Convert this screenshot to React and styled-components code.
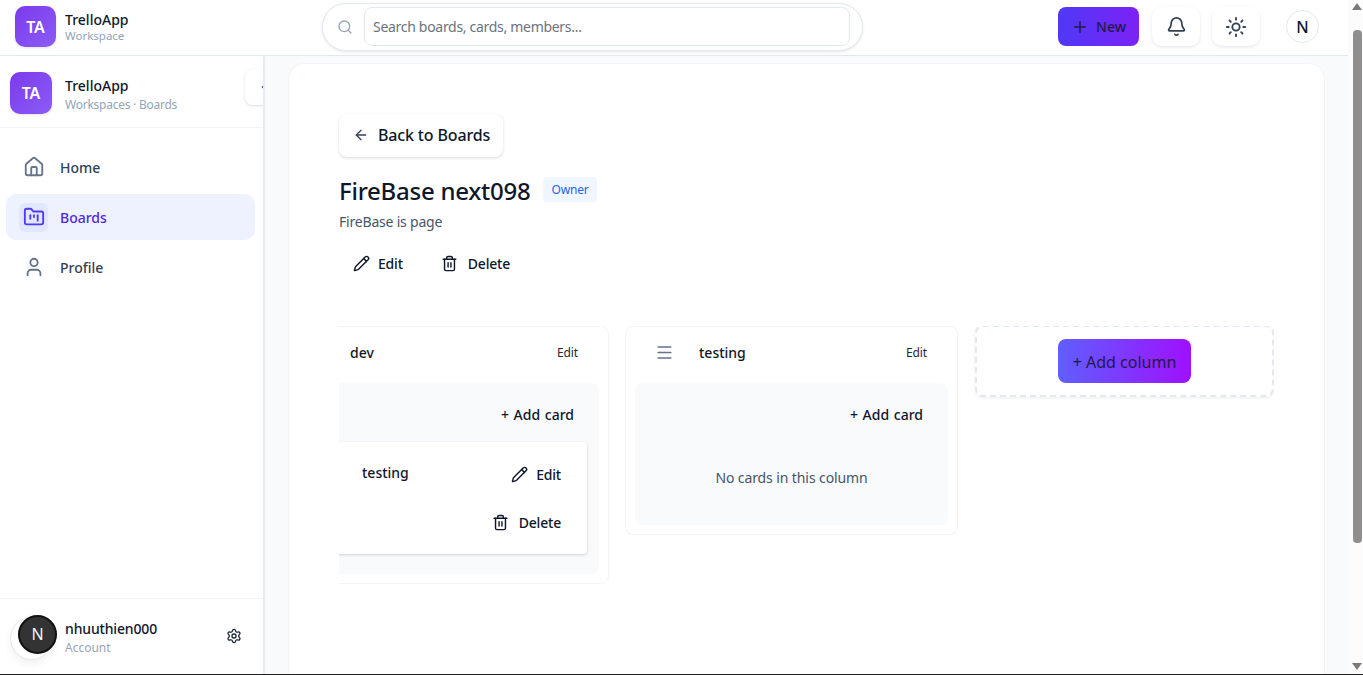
import styled, { createGlobalStyle } from "styled-components";
import {
  ArrowLeft,
  Bell,
  ChevronLeft,
  FolderKanban,
  House,
  Menu,
  Pencil,
  Plus,
  Search,
  Settings,
  Sun,
  Trash2,
  User,
} from "lucide-react";

const GlobalStyle = createGlobalStyle`
  html, body {
    margin: 0;
    height: 100%;
    overflow: hidden;
    background: #f8fafc;
    font-family: "Noto Sans", Inter, sans-serif;
    color: #0f172a;
  }
  * { box-sizing: border-box; }
`;

const Page = styled.div`
  display: flex;
  flex-direction: column;
  height: 675px;
  width: 1363px;
  position: relative;
  border-bottom: 1px solid #1f1f1f;
  overflow: hidden;
`;

const Header = styled.header`
  flex: none;
  height: 56px;
  width: 1348px;
  display: flex;
  align-items: center;
  padding: 0 29px 2px 15px;
  background: #fff;
  border-bottom: 1px solid #e2e8f0;
`;

const Brand = styled.div`
  display: flex;
  align-items: center;
  gap: 9px;
  width: 307px;
`;

const Logo = styled.div`
  width: ${(p) => p.$size}px;
  height: ${(p) => p.$size}px;
  flex: none;
  display: flex;
  align-items: center;
  justify-content: center;
  border-radius: 10px;
  background: linear-gradient(135deg, #7c3aed, #8b5cf6);
  color: #fff;
  font-size: 16px;
  font-weight: 600;
  box-shadow: 0 1px 3px rgba(15, 23, 42, 0.12);
`;

const BrandText = styled.div`
  display: flex;
  flex-direction: column;
  padding-top: ${(p) => (p.$spaced ? 4 : 0)}px;
`;

const BrandName = styled.span`
  font-size: 14px;
  line-height: 18px;
  font-weight: 500;
  color: #0f172a;
`;

const BrandSub = styled.span`
  font-size: ${(p) => (p.$spaced ? 12 : 11.5)}px;
  letter-spacing: ${(p) => (p.$spaced ? -0.25 : 0)}px;
  line-height: 14px;
  margin-top: ${(p) => (p.$spaced ? 3 : 0)}px;
  color: #94a3b8;
`;

const SearchBar = styled.div`
  width: 541px;
  height: 48px;
  display: flex;
  align-items: center;
  gap: 11px;
  padding: 0 12px 0 14px;
  border: 1px solid #e2e8f0;
  border-radius: 24px;
  background: #fff;
  box-shadow: 0 1px 3px rgba(15, 23, 42, 0.1);
  color: #94a3b8;
`;

const SearchInput = styled.div`
  flex: 1;
  height: 39px;
  display: flex;
  align-items: center;
  padding: 0 8px;
  border: 1px solid #e2e8f0;
  border-radius: 8px;
  font-size: 14px;
  letter-spacing: -0.3px;
  color: #6b7280;
`;

const HeaderActions = styled.div`
  margin-left: auto;
  display: flex;
  align-items: center;
  gap: 12px;
`;

const NewButton = styled.div`
  width: 81px;
  height: 39px;
  margin-right: 1px;
  display: flex;
  align-items: center;
  justify-content: center;
  gap: 7px;
  border-radius: 8px;
  background: linear-gradient(90deg, #4f39f6, #7c22f5);
  color: #1e1b4b;
  font-size: 14px;
  font-weight: 500;
`;

const IconButton = styled.div`
  width: 48px;
  height: 39px;
  display: flex;
  align-items: center;
  justify-content: center;
  border-radius: 10px;
  background: #fff;
  color: #334155;
  box-shadow: 0 1px 3px rgba(15, 23, 42, 0.12);
`;

const Avatar = styled.div`
  width: 33px;
  height: 33px;
  margin-left: 14px;
  display: flex;
  align-items: center;
  justify-content: center;
  border: 1px solid #e2e8f0;
  border-radius: 50%;
  font-size: 16px;
  font-weight: 500;
`;

const Body = styled.div`
  flex: 1;
  min-height: 0;
  display: flex;
  width: 1348px;
`;

const Sidebar = styled.aside`
  flex: none;
  width: 265px;
  margin-right: -1px;
  display: flex;
  flex-direction: column;
  background: #fff;
  border-right: 2px solid #e6ebf3;
`;

const SideTop = styled.div`
  position: relative;
  height: 72px;
  display: flex;
  align-items: center;
  gap: 13px;
  padding: 2px 10px 0;
  border-bottom: 1px solid #f1f5f9;
  overflow: hidden;
`;

const Collapse = styled.div`
  position: absolute;
  left: 245px;
  top: 13px;
  width: 36px;
  height: 36px;
  display: flex;
  align-items: center;
  padding-left: 12px;
  border-radius: 8px;
  background: #fff;
  color: #475569;
  box-shadow: 0 1px 3px rgba(15, 23, 42, 0.14);
`;

const Nav = styled.nav`
  flex: 1;
  display: flex;
  flex-direction: column;
  gap: 4px;
  padding: 16px 8px 0 6px;
`;

const NavItem = styled.div`
  height: 46px;
  display: flex;
  align-items: center;
  gap: 12px;
  padding-left: 13px;
  border-radius: 10px;
  background: ${(p) => (p.$active ? "#eef2ff" : "transparent")};
  color: ${(p) => (p.$active ? "#4f28e0" : "#334155")};
  font-size: 14px;
  font-weight: 500;
`;

const NavIcon = styled.span`
  width: 29px;
  height: 29px;
  display: flex;
  align-items: center;
  justify-content: center;
  border-radius: 6px;
  background: ${(p) => (p.$active ? "#e0e7ff" : "transparent")};
  color: ${(p) => (p.$active ? "#4f39f6" : "#64748b")};
`;

const Account = styled.div`
  height: 76px;
  display: flex;
  align-items: center;
  isolation: isolate;
  padding: 0 21px 0 18px;
  border-top: 1px solid #f1f5f9;
`;

const AccountAvatar = styled.div`
  position: relative;
  width: 39px;
  height: 39px;
  flex: none;
  margin: -5px 8px 0 0;
  display: flex;
  align-items: center;
  justify-content: center;
  border-radius: 50%;
  border: 2px solid #111;
  background: #333;
  color: #f1f5f9;
  font-size: 16px;

  &::before {
    content: "";
    position: absolute;
    left: -10px;
    top: 0;
    width: 41px;
    height: 41px;
    border: 1px solid #e2e8f0;
    border-radius: 50%;
    background: #fff;
    box-shadow: 0 4px 10px rgba(15, 23, 42, 0.06);
    z-index: -1;
  }
`;

const AccountText = styled.div`
  flex: 1;
  padding-top: 3px;
  display: flex;
  flex-direction: column;
`;

const AccountName = styled.span`
  font-size: 14px;
  line-height: 20px;
  letter-spacing: -0.15px;
  font-weight: 500;
  color: #0f172a;
`;

const AccountSub = styled.span`
  font-size: 12px;
  line-height: 18px;
  color: #94a3b8;
`;

const AccountGear = styled.span`
  display: flex;
  margin-top: -2px;
  color: #1e293b;
`;

const Main = styled.main`
  flex: 1;
  min-width: 0;
  padding: 7px 23px 0 24px;
  overflow: hidden;
`;

const Panel = styled.section`
  height: 720px;
  padding: 50px 50px 0;
  background: #fff;
  border: 1px solid #f1f5f9;
  border-radius: 16px;
`;

const BackButton = styled.div`
  width: 164px;
  height: 43px;
  display: flex;
  align-items: center;
  gap: 9px;
  padding: 0 0 2px 14px;
  border-radius: 8px;
  background: #fff;
  box-shadow: 0 1px 3px rgba(15, 23, 42, 0.16);
  color: #0f172a;
  font-size: 16px;
  letter-spacing: -0.15px;
  font-weight: 500;
`;

const TitleRow = styled.div`
  margin-top: 18px;
  display: flex;
  align-items: center;
  gap: 13px;
`;

const Title = styled.h1`
  margin: 0;
  font-size: 24px;
  line-height: 32px;
  letter-spacing: -0.25px;
  font-weight: 500;
  color: #0f172a;
`;

const Badge = styled.span`
  height: 25px;
  margin-bottom: 4px;
  padding: 0 8px;
  display: flex;
  align-items: center;
  border-radius: 4px;
  background: #eff6ff;
  color: #2563eb;
  font-size: 12px;
  letter-spacing: -0.15px;
`;

const Description = styled.p`
  margin: 5px 0 0;
  font-size: 14px;
  line-height: 20px;
  letter-spacing: -0.2px;
  color: #475569;
`;

const BoardActions = styled.div`
  margin-top: 22px;
  display: flex;
  gap: 38px;
  padding-left: 14px;
`;

const TextAction = styled.span`
  display: inline-flex;
  align-items: center;
  gap: ${(p) => p.$gap}px;
  font-size: 14px;
  letter-spacing: -0.2px;
  font-weight: 500;
  color: #0f172a;
`;

const BoardViewport = styled.div`
  margin-top: 53px;
  overflow: hidden;
`;

const BoardTrack = styled.div`
  display: flex;
  align-items: flex-start;
  gap: 16px;
  margin-left: -63px;
`;

const Column = styled.div`
  flex: none;
  width: 333px;
  padding: 0 9px 9px;
  border: 1px solid #f1f5f9;
  border-radius: 8px;
  background: #fff;
`;

const ColumnHead = styled.div`
  height: 56px;
  padding-bottom: 5px;
  display: flex;
  align-items: center;
  font-size: 14px;
  font-weight: 500;
`;

const Handle = styled.span`
  width: 64px;
  padding-left: 20px;
  display: flex;
  color: #64748b;
`;

const ColumnEdit = styled.span`
  margin-left: auto;
  margin-right: 21px;
  font-size: 12px;
  letter-spacing: -0.1px;
  font-weight: 400;
  color: #1e293b;
`;

const ColumnBody = styled.div`
  padding: 0 12px ${(p) => (p.$empty ? 0 : 20)}px;
  border-radius: 8px;
  background: #f8fafc;
  min-height: ${(p) => (p.$empty ? 142 : 0)}px;
`;

const AddCardRow = styled.div`
  height: 59px;
  padding: 4px 13px 0 0;
  display: flex;
  align-items: center;
  justify-content: flex-end;
  font-size: 14px;
  word-spacing: 1px;
  font-weight: 500;
  color: #0f172a;
`;

const Empty = styled.div`
  padding-top: 26px;
  text-align: center;
  font-size: 14px;
  line-height: 20px;
  letter-spacing: -0.1px;
  color: #475569;
`;

const Card = styled.div`
  height: 112px;
  padding: 20px 26px 0 64px;
  display: flex;
  justify-content: space-between;
  border-radius: 4px;
  background: #fff;
  box-shadow: 0 1px 3px rgba(15, 23, 42, 0.18);
`;

const CardTitle = styled.span`
  font-size: 14px;
  line-height: 22px;
  font-weight: 500;
`;

const CardActions = styled.div`
  display: flex;
  flex-direction: column;
  align-items: flex-end;
  gap: 29px;
  padding-top: 3px;
`;

const AddColumnBox = styled.div`
  flex: none;
  width: 299px;
  height: 72px;
  margin: -1px 0 0 1px;
  padding-top: 12px;
  display: flex;
  justify-content: center;
  border: 2px dashed #e2e8f0;
  border-radius: 8px;
  box-shadow: 0 1px 3px rgba(15, 23, 42, 0.08);
`;

const AddColumnButton = styled.div`
  width: 133px;
  height: 44px;
  padding-top: 1px;
  display: flex;
  align-items: center;
  justify-content: center;
  border-radius: 8px;
  background: linear-gradient(90deg, #5f5fff, #a010ff);
  color: #1e1b4b;
  font-size: 16px;
`;

const ScrollTrack = styled.div`
  position: absolute;
  top: 0;
  right: 0;
  bottom: 0;
  width: 15px;
  display: flex;
  flex-direction: column;
  align-items: center;
  padding: 3px 0 4px 3px;
  background: #fcfcfc;
`;

const ScrollArrow = styled.span`
  width: 0;
  height: 0;
  border-left: 5px solid transparent;
  border-right: 5px solid transparent;
  ${(p) =>
    p.$down
      ? "border-top: 7px solid #7a7a7a; margin-top: auto;"
      : "border-bottom: 7px solid #7a7a7a;"}
`;

const ScrollThumb = styled.span`
  width: 9px;
  height: 513px;
  margin-top: 20px;
  border-radius: 4px;
  background: #8f8f8f;
`;

const App = () => {
  return (
    <Page>
      <GlobalStyle />
      <Header>
        <Brand>
          <Logo $size={41}>TA</Logo>
          <BrandText>
            <BrandName>TrelloApp</BrandName>
            <BrandSub>Workspace</BrandSub>
          </BrandText>
        </Brand>
        <SearchBar>
          <Search size={16} />
          <SearchInput>Search boards, cards, members...</SearchInput>
        </SearchBar>
        <HeaderActions>
          <NewButton>
            <Plus size={18} />
            New
          </NewButton>
          <IconButton>
            <Bell size={21} />
          </IconButton>
          <IconButton>
            <Sun size={22} />
          </IconButton>
          <Avatar>N</Avatar>
        </HeaderActions>
      </Header>
      <Body>
        <Sidebar>
          <SideTop>
            <Logo $size={42}>TA</Logo>
            <BrandText $spaced>
              <BrandName>TrelloApp</BrandName>
              <BrandSub $spaced>Workspaces · Boards</BrandSub>
            </BrandText>
            <Collapse>
              <ChevronLeft size={14} />
            </Collapse>
          </SideTop>
          <Nav>
            <NavItem>
              <NavIcon>
                <House size={22} />
              </NavIcon>
              Home
            </NavItem>
            <NavItem $active>
              <NavIcon $active>
                <FolderKanban size={22} />
              </NavIcon>
              Boards
            </NavItem>
            <NavItem>
              <NavIcon>
                <User size={22} />
              </NavIcon>
              Profile
            </NavItem>
          </Nav>
          <Account>
            <AccountAvatar>N</AccountAvatar>
            <AccountText>
              <AccountName>nhuuthien000</AccountName>
              <AccountSub>Account</AccountSub>
            </AccountText>
            <AccountGear>
              <Settings size={16} />
            </AccountGear>
          </Account>
        </Sidebar>
        <Main>
          <Panel>
            <BackButton>
              <ArrowLeft size={16} color="#334155" />
              Back to Boards
            </BackButton>
            <TitleRow>
              <Title>FireBase next098</Title>
              <Badge>Owner</Badge>
            </TitleRow>
            <Description>FireBase is page</Description>
            <BoardActions>
              <TextAction $gap={8}>
                <Pencil size={17} />
                Edit
              </TextAction>
              <TextAction $gap={10}>
                <Trash2 size={17} />
                Delete
              </TextAction>
            </BoardActions>
            <BoardViewport>
              <BoardTrack>
                <Column>
                  <ColumnHead>
                    <Handle>
                      <Menu size={19} />
                    </Handle>
                    dev
                    <ColumnEdit>Edit</ColumnEdit>
                  </ColumnHead>
                  <ColumnBody>
                    <AddCardRow>+ Add card</AddCardRow>
                    <Card>
                      <CardTitle>testing</CardTitle>
                      <CardActions>
                        <TextAction $gap={8}>
                          <Pencil size={17} />
                          Edit
                        </TextAction>
                        <TextAction $gap={10}>
                          <Trash2 size={17} />
                          Delete
                        </TextAction>
                      </CardActions>
                    </Card>
                  </ColumnBody>
                </Column>
                <Column>
                  <ColumnHead>
                    <Handle>
                      <Menu size={19} />
                    </Handle>
                    testing
                    <ColumnEdit>Edit</ColumnEdit>
                  </ColumnHead>
                  <ColumnBody $empty>
                    <AddCardRow>+ Add card</AddCardRow>
                    <Empty>No cards in this column</Empty>
                  </ColumnBody>
                </Column>
                <AddColumnBox>
                  <AddColumnButton>+ Add column</AddColumnButton>
                </AddColumnBox>
              </BoardTrack>
            </BoardViewport>
          </Panel>
        </Main>
      </Body>
      <ScrollTrack>
        <ScrollArrow />
        <ScrollThumb />
        <ScrollArrow $down />
      </ScrollTrack>
    </Page>
  );
};

export default App;
